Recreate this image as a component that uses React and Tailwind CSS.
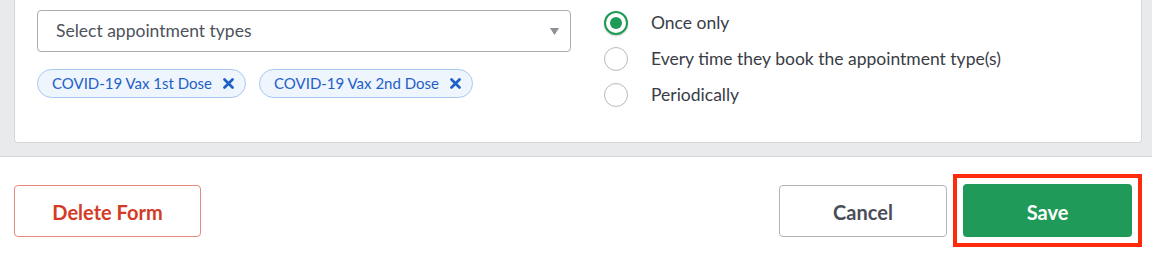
import React from 'react'

const chips = ['COVID-19 Vax 1st Dose', 'COVID-19 Vax 2nd Dose']

const options = [
  { label: 'Once only', checked: true },
  { label: 'Every time they book the appointment type(s)', checked: false },
  { label: 'Periodically', checked: false }
]

function Radio({ checked }) {
  if (checked) {
    return (
      <span className="w-[24px] h-[24px] rounded-full border-2 border-[#1e9a57] bg-white flex items-center justify-center shadow-[0_1px_2px_rgba(0,0,0,0.2)]">
        <span className="w-[12px] h-[12px] rounded-full bg-[#1e9a57]" />
      </span>
    )
  }
  return <span className="w-[24px] h-[24px] rounded-full border border-[#b8b9bc] bg-white" />
}

export default function App() {
  return (
    <div className="w-[1152px] h-[253px] bg-white overflow-hidden" style={{ fontFamily: 'Lato, "Open Sans", sans-serif' }}>
      {/* form panel */}
      <div className="bg-[#e9eaec] h-[157px] border-b border-[#d4d5d8] pl-[14px] pr-[10px]">
        <div className="bg-white border-x border-b border-[#d6d7da] rounded-b-[4px] h-[143px] flex pl-[22px] pt-[10px]">
          <div className="w-[534px]">
            <div className="h-[42px] border border-[#a9abaf] rounded-[4px] flex items-center justify-between pl-[18px] pr-[11px]">
              <span className="text-[17.5px] text-[#4d525b]">Select appointment types</span>
              <svg width="9" height="7" viewBox="0 0 9 7">
                <path d="M0 0 L9 0 L4.5 7 Z" fill="#8e9095" />
              </svg>
            </div>
            <div className="flex gap-[13px] mt-[17px]">
              {chips.map(c => (
                <span key={c} className="h-[29px] flex items-center gap-[11px] pl-[14px] pr-[11px] rounded-full bg-[#eef5fd] border border-[#a9c8f1] text-[15px] text-[#1f5fc8]">
                  {c}
                  <svg width="11" height="11" viewBox="0 0 11 11">
                    <path d="M1.5 1.5 L9.5 9.5 M9.5 1.5 L1.5 9.5" stroke="#1f5fc8" strokeWidth="2.7" strokeLinecap="round" />
                  </svg>
                </span>
              ))}
            </div>
          </div>
          <div className="ml-[33px] flex flex-col gap-[12px] pt-[1px]">
            {options.map(o => (
              <label key={o.label} className="flex items-center gap-[23px] h-[24px]">
                <Radio checked={o.checked} />
                <span className="text-[17.5px] text-[#393d46]">{o.label}</span>
              </label>
            ))}
          </div>
        </div>
      </div>

      {/* footer actions */}
      <div className="flex items-center justify-between pl-[14px] pr-[10px] pt-[17px]">
        <button className="w-[187px] h-[52px] pt-[3px] border border-[#e6897c] rounded-[4px] text-[20px] font-bold text-[#d33b26]">
          Delete Form
        </button>
        <div className="flex items-center gap-[6px]">
          <button className="w-[168px] h-[52px] pt-[3px] border border-[#b2b4b8] rounded-[4px] text-[20px] font-bold text-[#4a4e58]">
            Cancel
          </button>
          <div className="border-[4px] border-[#ff2a0a] p-[6px]">
            <button className="w-[169px] h-[53px] pt-[3px] bg-[#1f9a58] rounded-[4px] text-[20px] font-bold text-white">
              Save
            </button>
          </div>
        </div>
      </div>
    </div>
  )
}
